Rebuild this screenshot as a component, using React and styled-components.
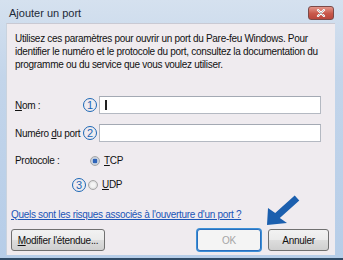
import React from "react";
import styled, { createGlobalStyle } from "styled-components";

const GlobalStyle = createGlobalStyle`
  html, body {
    margin: 0;
    padding: 0;
    background: #ffffff;
  }
  body {
    font-family: "Liberation Sans", Arial, sans-serif;
    letter-spacing: -0.3px;
  }
`;

const Frame = styled.div`
  position: relative;
  width: 343px;
  height: 260px;
  box-sizing: border-box;
  background: linear-gradient(180deg, #d5e1ef 0%, #c3d5ea 30%, #b6cde8 100%);
  border-bottom: 2px solid #2f4a66;
  display: flex;
  flex-direction: column;
  padding: 0 8px 3px 6px;
  overflow: hidden;
`;

const TitleBar = styled.div`
  height: 23px;
  flex: none;
  display: flex;
  align-items: center;
  justify-content: space-between;
  padding: 2px 1px 0 3px;
  box-sizing: border-box;
`;

const Title = styled.div`
  font-size: 11px;
  letter-spacing: 0;
  color: #1e2a38;
`;

const CloseButton = styled.div`
  width: 24px;
  height: 12px;
  border-radius: 3px;
  border: 1px solid #7a4a48;
  background: linear-gradient(180deg, #e4968a 0%, #c8584a 55%, #b9473c 100%);
  display: flex;
  align-items: center;
  justify-content: center;
`;

const Body = styled.div`
  flex: 1;
  background: #efebef;
  border-top: 1px solid #c9c9d3;
  border-left: 1px solid #c9d3de;
  display: flex;
  flex-direction: column;
  padding: 8px 6px 0 8px;
  box-sizing: border-box;
`;

const Text = styled.p`
  margin: 0;
  font-size: 10px;
  line-height: 13px;
  color: #111;
`;

const FieldRow = styled.div`
  display: flex;
  align-items: center;
  height: 18px;
  margin-top: ${(p) => p.$top}px;
`;

const Label = styled.span`
  width: ${(p) => p.$w || 68}px;
  flex: none;
  white-space: nowrap;
  font-size: 10px;
  color: #111;
`;

const Badge = styled.span`
  width: 12px;
  height: 12px;
  border: 1.5px solid #1c67b5;
  border-radius: 50%;
  color: #1c67b5;
  font-size: 11px;
  letter-spacing: 0;
  line-height: 12px;
  display: flex;
  align-items: center;
  justify-content: center;
  margin-right: 2px;
  flex: none;
`;

const Input = styled.div`
  width: 222px;
  height: 18px;
  box-sizing: border-box;
  background: #fff;
  border: 1px solid #b4b9c2;
  border-top-color: #a3a9b3;
  display: flex;
  align-items: center;
  padding-left: 5px;
`;

const Caret = styled.span`
  width: 1.5px;
  height: 10px;
  background: #222;
`;

const RadioRow = styled.div`
  display: flex;
  align-items: center;
  height: 15px;
  margin-top: ${(p) => p.$top}px;
`;

const RadioDot = styled.span`
  width: 8px;
  height: 8px;
  border-radius: 50%;
  border: 1px solid #a7a7a7;
  background: radial-gradient(
    circle,
    ${(p) => (p.$on ? "#2e63b8 0 2.2px, #c6d0de 2.6px" : "#f4f4f4 0 2px, #dcdcdc 4px")}
  );
  margin-right: 4px;
  flex: none;
`;

const Link = styled.a`
  font-size: 10px;
  line-height: 13px;
  color: #1b55b7;
  text-decoration: underline;
  white-space: nowrap;
  margin-top: 16px;
  margin-left: -4px;
  align-self: flex-start;
`;

const ButtonRow = styled.div`
  display: flex;
  align-items: center;
  margin-top: 8px;
  margin-left: -4px;
`;

const Button = styled.div`
  height: 22px;
  width: ${(p) => p.$w}px;
  flex: none;
  box-sizing: border-box;
  white-space: nowrap;
  border: 1px solid ${(p) => (p.$focus ? "#2a6fbe" : "#707070")};
  border-radius: 3px;
  box-shadow: ${(p) => (p.$focus ? "0 0 0 1px #3d8fd6" : "none")};
  background: ${(p) =>
    p.$disabled
      ? "#f4f4f4"
      : "linear-gradient(180deg, #f2f2f2 0%, #ebebeb 50%, #dddddd 51%, #cfcfcf 100%)"};
  color: ${(p) => (p.$disabled ? "#a5a5a5" : "#111")};
  font-size: 10px;
  display: flex;
  align-items: center;
  justify-content: center;
  margin-left: ${(p) => p.$ml || 0}px;
`;

const Arrow = styled.svg`
  position: absolute;
  left: 260px;
  top: 193px;
  pointer-events: none;
`;

export default function App() {
  return (
    <>
      <GlobalStyle />
      <Frame>
        <TitleBar>
          <Title>Ajouter un port</Title>
          <CloseButton>
            <svg width="10" height="8" viewBox="0 0 10 8">
              <path d="M2 1 L8 7 M8 1 L2 7" stroke="#fff" strokeWidth="2.2" strokeLinecap="round" />
              <path d="M2 1 L8 7 M8 1 L2 7" stroke="#8a8a8a" strokeWidth="0.6" strokeLinecap="round" />
            </svg>
          </CloseButton>
        </TitleBar>
        <Body>
          <Text>
            Utilisez ces paramètres pour ouvrir un port du Pare-feu Windows. Pour
            identifier le numéro et le protocole du port, consultez la documentation du
            programme ou du service que vous voulez utiliser.
          </Text>
          <FieldRow $top={25}>
            <Label>
              <u>N</u>om :
            </Label>
            <Badge>1</Badge>
            <Input>
              <Caret />
            </Input>
          </FieldRow>
          <FieldRow $top={10}>
            <Label>
              Numéro <u>d</u>u port
            </Label>
            <Badge>2</Badge>
            <Input />
          </FieldRow>
          <RadioRow $top={11}>
            <Label $w={75}>Protocole :</Label>
            <RadioDot $on />
            <Label>
              <u>T</u>CP
            </Label>
          </RadioRow>
          <RadioRow $top={9}>
            <Label $w={57} />
            <Badge>3</Badge>
            <RadioDot />
            <Label>
              <u>U</u>DP
            </Label>
          </RadioRow>
          <Link href="#">Quels sont les risques associés à l'ouverture d'un port ?</Link>
          <ButtonRow>
            <Button $w={94}>
              <span>
                <u>M</u>odifier l'étendue...
              </span>
            </Button>
            <Button $w={64} $ml={92} $focus $disabled>
              OK
            </Button>
            <Button $w={61} $ml={7}>
              Annuler
            </Button>
          </ButtonRow>
        </Body>
        <Arrow width="45" height="38" viewBox="0 0 45 38">
          <path
            d="M7 32 L8 15 L15.2 19.9 L34.7 2.4 L39.3 7.6 L19.8 25.1 L27 30 Z"
            fill="#1b5fae"
          />
        </Arrow>
      </Frame>
    </>
  );
}
